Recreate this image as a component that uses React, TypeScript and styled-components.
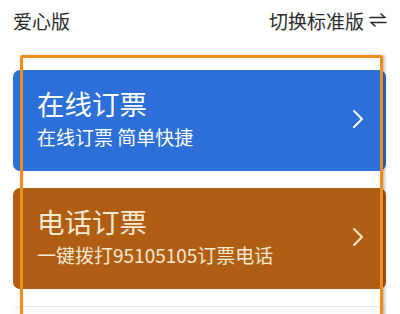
import React from "react";
import styled, { createGlobalStyle } from "styled-components";

const GlobalStyle = createGlobalStyle`
  html, body {
    margin: 0;
    padding: 0;
    background: #ffffff;
  }
  body {
    font-family: "Noto Sans CJK SC", "Noto Sans", sans-serif;
  }
`;

const Page = styled.div`
  position: relative;
  width: 400px;
  height: 314px;
  overflow: hidden;
  background: #ffffff;
`;

const TopBar = styled.div`
  height: 40px;
  padding: 0 13px 0 13px;
  display: flex;
  align-items: center;
  justify-content: space-between;
  color: #2b2b2b;
  font-size: 19px;
`;

const Switch = styled.div`
  display: flex;
  align-items: center;
  gap: 5px;
`;

const CardList = styled.div`
  padding: 30px 14px 0 13px;
  display: flex;
  flex-direction: column;
  gap: 17px;
`;

const Card = styled.div<{ $bg: string; $fg: string }>`
  height: 101px;
  box-sizing: border-box;
  border-radius: 7px;
  background: ${(p) => p.$bg};
  color: ${(p) => p.$fg};
  padding: 17px 22px 21px 24px;
  display: flex;
  align-items: center;
  justify-content: space-between;
`;

const EmptyCard = styled.div`
  height: 101px;
  border-radius: 7px;
  border-top: 1px solid #e8e8ec;
  background: #fdfdfd;
`;

const Texts = styled.div`
  display: flex;
  flex-direction: column;
  gap: 6px;
`;

const Title = styled.div`
  font-size: 27.5px;
  line-height: 30px;
`;

const Sub = styled.div`
  font-size: 19px;
  line-height: 25px;
`;

const Highlight = styled.div`
  position: absolute;
  left: 20px;
  top: 55px;
  width: 357px;
  height: 300px;
  border: 3px solid #f28c1c;
  border-radius: 2px;
  box-shadow: 2px 0 3px rgba(0, 0, 0, 0.25);
  pointer-events: none;
`;

const Chevron = ({ color }: { color: string }) => (
  <svg width="12" height="20" viewBox="0 0 12 20">
    <path d="M2 2 L10 10 L2 18" fill="none" stroke={color} strokeWidth="2" strokeLinecap="round" strokeLinejoin="round" />
  </svg>
);

const SwapIcon = () => (
  <svg width="18" height="14" viewBox="0 0 18 14">
    <path d="M1 4.5 H16 M12 1 L16 4.5" fill="none" stroke="#2b2b2b" strokeWidth="1.6" strokeLinecap="round" />
    <path d="M17 9.5 H2 M6 13 L2 9.5" fill="none" stroke="#2b2b2b" strokeWidth="1.6" strokeLinecap="round" />
  </svg>
);

const App = () => {
  return (
    <Page>
      <GlobalStyle />
      <TopBar>
        <span>爱心版</span>
        <Switch>
          <span>切换标准版</span>
          <SwapIcon />
        </Switch>
      </TopBar>
      <CardList>
        <Card $bg="#2c6fd9" $fg="#ffffff">
          <Texts>
            <Title>在线订票</Title>
            <Sub>在线订票 简单快捷</Sub>
          </Texts>
          <Chevron color="#ffffff" />
        </Card>
        <Card $bg="#b05e13" $fg="#f6ead2">
          <Texts>
            <Title>电话订票</Title>
            <Sub>一键拨打95105105订票电话</Sub>
          </Texts>
          <Chevron color="#f6ead2" />
        </Card>
        <EmptyCard />
      </CardList>
      <Highlight />
    </Page>
  );
};

export default App;
